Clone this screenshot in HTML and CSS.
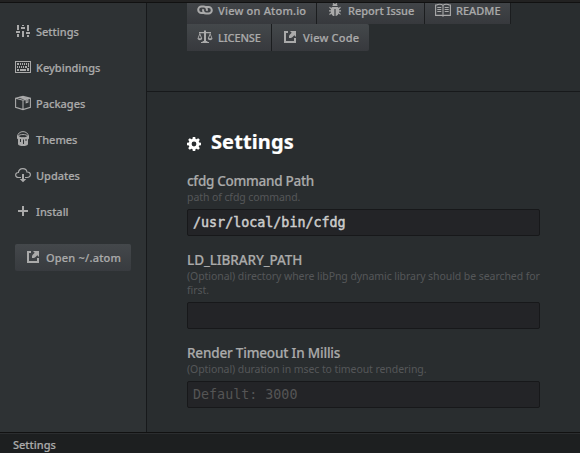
FILE: index.html
```html
<!DOCTYPE html>
<html lang="en">
<head>
<meta charset="utf-8">
<title>Settings</title>
<link rel="stylesheet" href="styles.css">
</head>
<body>
<div class="workspace">
  <div class="tab-edge"></div>
  <div class="settings-view">
    <nav class="sidebar">
      <a class="nav-item"><svg class="icon" viewBox="0 0 16 16"><path d="M2 2h2v5H2zM1 8h4v2H1zM2 11h2v3H2zM7 2h2v1H7zM6 4h4v2H6zM7 8h2v6H7zM12 2h2v6h-2zM11 9h4v2h-4zM12 12h2v2h-2z"/></svg><span>Settings</span></a>
      <a class="nav-item"><svg class="icon" viewBox="0 0 16 16"><path fill-rule="evenodd" d="M0 2h16v12H0zM1 3v10h14V3z"/><path d="M2 4h2v2H2zM5 4h1v2H5zM7 4h1v2H7zM9 4h1v2H9zM11 4h1v2h-1zM13 4h1v4h-1zM2 7h1v2H2zM4 7h1v2H4zM6 7h1v2H6zM8 7h1v2H8zM10 7h2v2h-2zM2 10h2v2H2zM5 10h6v2H5zM12 9h2v3h-2z"/></svg><span>Keybindings</span></a>
      <a class="nav-item"><svg class="icon line" viewBox="0 0 16 16"><path d="M.6 3.2 8 1.2l7.4 2v9.2L8 14.6.6 12.4zM.6 3.2 8 5.3l7.4-2.1M8 5.3v9.3M3.8 2.3l7.4 2.1v3.4l1.700-.7V3.800L5.500 1.900"/></svg><span>Packages</span></a>
      <a class="nav-item"><svg class="icon" viewBox="0 0 16 16"><path fill="none" stroke="currentColor" d="M2.600 5.500C2.600-1 13.400-1 13.400 5.500M3.500 5.200c0-2.200 9-2.200 9 0s-9 2.200-9 0z"/><path d="M2 4.500h1.300c.4 2.800 9 2.800 9.400 0H14v2.800c0 .5-.4.9-1 1V13c0 2.700-10 2.700-10 0V8.300c-.6-.2-1-.5-1-1z"/><path class="cut" d="M5 8h1v3H5zM8 8.500h1V13H8zM10.500 8h1v2h-1z"/></svg><span>Themes</span></a>
      <a class="nav-item"><svg class="icon" viewBox="0 0 16 16"><path fill="none" stroke="currentColor" stroke-width="1.2" d="M6 10.500H3.500C-.3 10.500-.2 5.400 3.400 5.500 4 .4 11.300.4 12 5c4.500-.3 4.500 5.500 0 5.500h-2"/><path d="M7 7h2v5h2.300L8 15.200 4.700 12H7z"/></svg><span>Updates</span></a>
      <a class="nav-item"><svg class="icon" viewBox="0 0 16 16"><path d="M7 3h2v4h4v2H9v4H7V9H3V7h4z"/></svg><span>Install</span></a>
      <a class="open-btn"><svg class="icon" viewBox="0 0 16 16"><path d="M2 2h4v2H4v8h8V9h2v5H2zM8 2h6v6l-1.700-1.700-2 2L9 9H7V7l.700-1.300 2-2z"/></svg><span class="t-open">Open ~/.atom</span></a>
    </nav>
    <main class="panel">
      <section class="actions">
        <div class="btn-row">
          <a class="btn b-atom"><svg class="icon link" viewBox="0 0 16 16"><path d="M7 11H4.500a3.300 3.300 0 0 1 0-6.600h2.300a3.300 3.300 0 0 1 2.900 4.500M9 5h2.500a3.300 3.300 0 0 1 0 6.600H9.200a3.300 3.300 0 0 1-2.900-4.500"/></svg><span class="t-atom">View on Atom.io</span></a>
          <a class="btn b-report"><svg class="icon" viewBox="0 0 16 16"><path d="M5.500 4c0-1 .3-1.500.9-2L5.500 1l.6-.6L7.400 1.700h1.200L9.900.4l.6.600-.9 1c.6.500.9 1 .9 2zM5 5h6l.7.900 1.500-1.100.7 1-1.800 1.400.1 1H14v1.200h-1.800l-.1 1 1.800 1.500-.7.900-1.600-1.200C11 13.200 10 14 8.600 14V7H7.400v7C6 14 5 13.200 4.400 11.700l-1.600 1.200-.7-.9 1.800-1.500-.1-1H2V8.200h1.800l.1-1-1.800-1.400.7-1 1.500 1.100z"/></svg><span>Report Issue</span></a>
          <a class="btn b-readme"><svg class="icon line" viewBox="0 0 16 16"><path d="M.6 3h1.200C3 2 6.500 2 8 3.300 9.500 2 13 2 14.200 3h1.200v10.400H9.200L8 14.200l-1.200-.8H.6zM8 3.300v10M2.300 5.500h4M2.300 7.500h4M2.300 9.500h4M9.700 5.500h4M9.700 7.500h4M9.700 9.500h4"/></svg><span>README</span></a>
        </div>
        <div class="btn-row">
          <a class="btn b-license"><svg class="icon" viewBox="0 0 16 16"><path d="M7 1.500h2V3h5v1.200h-.7L15.500 9.500c-.6 2.300-4.200 2.300-4.700 0l2.100-5.300H9V12c1 0 1.500.4 1.700 1H12v1H4v-1h1.300c.2-.6.700-1 1.700-1V4.200H3.100l2.100 5.300c-.5 2.300-4.100 2.300-4.700 0l2.100-5.300H2V3h5zM2.800 6 1.500 9.300h2.600zM13.200 6l-1.300 3.300h2.600z" fill-rule="evenodd"/></svg><span class="t-license">LICENSE</span></a>
          <a class="btn b-code"><svg class="icon" viewBox="0 0 16 16"><path d="M2 2h4v2H4v8h8V9h2v5H2zM8 2h6v6l-1.700-1.700-2 2L9 9H7V7l.700-1.300 2-2z"/></svg><span class="t-code">View Code</span></a>
        </div>
      </section>
      <section class="config">
        <h1 class="heading"><svg class="gear" viewBox="0 0 14 14"><path fill-rule="evenodd" d="M5.800 0h2.400l.4 1.900 1 .4L11.200 1.200l1.600 1.600-1.100 1.600.4 1 1.900.4v2.400l-1.900.4-.4 1 1.100 1.600-1.600 1.600-1.600-1.100-1 .4-.4 1.900H5.800l-.4-1.900-1-.4-1.600 1.100-1.600-1.600 1.100-1.600-.4-1L0 8.200V5.800l1.900-.4.4-1-1.100-1.600 1.600-1.600 1.600 1.100 1-.4zM7 4.600a2.400 2.400 0 1 0 0 4.800 2.400 2.400 0 0 0 0-4.800z"/></svg><span class="t-head">Settings</span></h1>
        <div class="field">
          <div class="label t-l1">cfdg Command Path</div>
          <div class="desc t-d1">path of cfdg command.</div>
          <div class="editor value">/usr/local/bin/cfdg</div>
        </div>
        <div class="field">
          <div class="label t-l2">LD_LIBRARY_PATH</div>
          <div class="desc t-d2">(Optional) directory where libPng dynamic library should be searched for<br>first.</div>
          <div class="editor"></div>
        </div>
        <div class="field">
          <div class="label t-l3">Render Timeout In Millis</div>
          <div class="desc t-d3">(Optional) duration in msec to timeout rendering.</div>
          <div class="editor placeholder">Default: 3000</div>
        </div>
      </section>
    </main>
  </div>
  <footer class="status">Settings</footer>
</div>
</body>
</html>
```
FILE: styles.css
```css
* { box-sizing: border-box; }
body {
  margin: 0;
  background: #292d2f;
  color: #aaa;
  font: 500 11px/16px "Noto Sans", "Open Sans", sans-serif;
  -webkit-text-stroke: 0.2px currentColor;
}
.workspace { display: flex; flex-direction: column; width: 580px; height: 453px; overflow: hidden; white-space: nowrap; }
.tab-edge { flex: none; height: 3px; background: #222; border-bottom: 1px solid #111; }
.settings-view { display: flex; flex: none; height: 430px; overflow: hidden; }
.sidebar { display: flex; flex-direction: column; flex: none; width: 147px; padding: 11px 15px 0; background: #2e3234; border-right: 1px solid #17191b; }
.nav-item { display: flex; align-items: center; gap: 5px; height: 36px; }
.icon { flex: none; width: 16px; height: 16px; margin-bottom: 2px; fill: currentColor; }
.line { fill: none; stroke: currentColor; stroke-width: 1.1; }
.link { fill: none; stroke: currentColor; stroke-width: 2; }
.cut { fill: #2e3234; }
.open-btn { display: flex; align-items: center; gap: 5px; width: 116px; height: 27px; margin-top: 14px; padding-left: 10px; border-radius: 2px; background: linear-gradient(#44484b, #383b3f); }
.panel { display: flex; flex-direction: column; flex: 1; min-width: 0; }
.actions { display: flex; flex-direction: column; flex: none; height: 89px; padding-left: 40px; border-bottom: 1px solid #17191b; }
.btn-row { display: flex; flex: none; height: 27px; }
.btn-row:first-child { margin-top: -6px; }
.btn { display: flex; align-items: center; gap: 5px; padding-left: 10px; border-right: 1px solid #1b1d1f; background: linear-gradient(#44484b, #37393d); }
.b-atom { width: 130px; }
.b-report { width: 108px; }
.b-readme { width: 86px; }
.b-license { width: 85px; }
.b-code { width: 97px; border-radius: 0 2px 2px 0; border-right: 0; }
.config { padding: 36px 40px 0; }
.heading { display: flex; align-items: center; gap: 10px; height: 28px; margin: 0 0 17px; color: #fff; font-size: 20px; line-height: 28px; font-weight: 700; }
.gear { width: 14px; height: 14px; margin-top: 4px; fill: currentColor; }
.field { margin-bottom: 16px; }
.label { height: 17px; font-size: 13.5px; line-height: 17px; }
.desc { margin-bottom: 5px; color: #555759; font-size: 10.5px; line-height: 14px; font-weight: 400; -webkit-text-stroke: 0; }
.editor { height: 27px; padding-left: 5px; border: 1px solid #17181a; border-radius: 2px; background: #232427; font: 13.35px/25px "DejaVu Sans Mono", monospace; -webkit-text-stroke: 0; }
.value { color: #ccc; -webkit-text-stroke: 0.5px #ccc; }
.placeholder { color: #555; }
.status { flex: 1; padding: 3px 13px 0; border-top: 1px solid #2b2d2f; background: #1d1f20; box-shadow: 0 -1px #111; }
.t-atom, .t-open, .t-code { letter-spacing: 0.2px; }
.t-license { letter-spacing: -0.12px; }
.t-head { letter-spacing: 0.1px; }
.t-l1 { letter-spacing: -0.28px; }
.t-l2 { letter-spacing: -0.08px; }
.t-l3 { letter-spacing: -0.18px; }
.t-d1, .t-d3 { letter-spacing: -0.08px; }
.t-d2 { letter-spacing: -0.07px; }
```
